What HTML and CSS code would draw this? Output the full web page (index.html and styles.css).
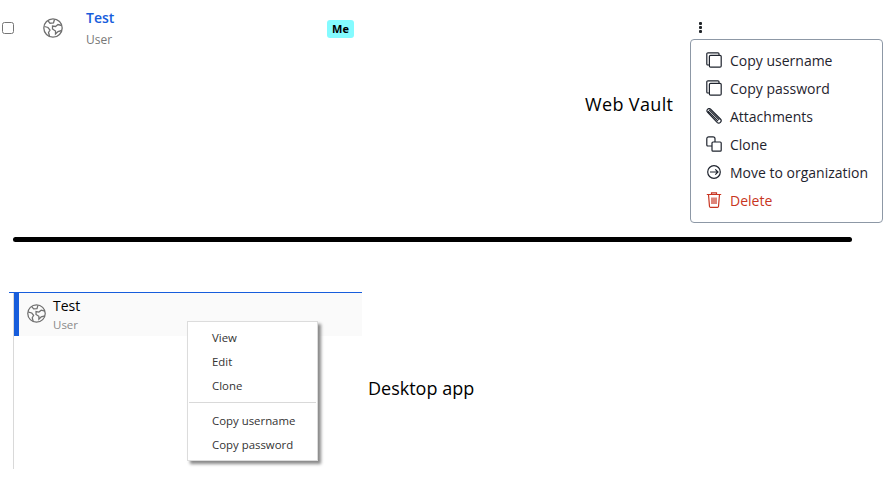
FILE: index.html
```html
<!DOCTYPE html>
<html lang="en">
<head>
    <meta charset="UTF-8">
    <title>Web Vault and Desktop app menus</title>
    <link rel="stylesheet" href="styles.css">
</head>
<body>
    <svg class="defs" width="0" height="0">
        <symbol id="globe" viewBox="0 0 20 20">
            <circle cx="10" cy="10" r="9.2"/>
            <path d="M5 2.800 7 5.200 10.500 4.800 11.500 1.500M1.500 8.500 5 9.500 7 12 5.500 14.500 6.500 18M18.800 7.500 15 6.500 12.500 8.500 9.500 8 9.500 11 12.500 13 12.500 16 15 13.500 18.800 12.500"/>
        </symbol>
        <symbol id="copy" viewBox="0 0 16 16">
            <path d="M3 13H1.800a1 1 0 0 1-1-1V2a1.200 1.200 0 0 1 1.200-1.200H12a1 1 0 0 1 1 1V3"/>
            <rect x="3.400" y="3.400" width="11.800" height="11.800" rx="1.200"/>
        </symbol>
    </svg>

    <section class="vault">
        <div class="cipher-row">
            <input type="checkbox" class="cipher-check">
            <svg class="globe vault-globe"><use href="#globe"/></svg>
            <div class="cipher-name">
                <a class="cipher-link">Test</a>
                <small>User</small>
            </div>
            <span class="badge">Me</span>
        </div>
        <div class="vault-label">Web Vault</div>
        <div class="actions">
            <div class="kebab"><i></i><i></i><i></i></div>
            <ul class="action-menu">
                <li><svg class="menu-icon"><use href="#copy"/></svg>Copy username</li>
                <li><svg class="menu-icon"><use href="#copy"/></svg>Copy password</li>
                <li>
                    <svg class="menu-icon" viewBox="0 0 16 16">
                        <path d="M1.200 3.800a2.200 2.200 0 0 1 3.200-2.800l10 10a2.300 2.300 0 0 1-3.300 3.300L1.200 3.800M3.200 1.800l10 10M2 3.200l10 10"/>
                    </svg>Attachments
                </li>
                <li>
                    <svg class="menu-icon" viewBox="0 0 16 16">
                        <path d="M6 10H1.800a1 1 0 0 1-1-1V3a2 2 0 0 1 2-2.200H7a2 2 0 0 1 2 2V6"/>
                        <rect x="6" y="6" width="9.200" height="9.200" rx="1"/>
                    </svg>Clone
                </li>
                <li>
                    <svg class="menu-icon" viewBox="0 0 16 16">
                        <circle cx="8" cy="8" r="6.300"/>
                        <path d="M4 8h8M9.300 5.300 12 8 9.300 10.700"/>
                    </svg>Move to organization
                </li>
                <li class="danger">
                    <svg class="menu-icon" viewBox="0 0 16 16">
                        <path d="M.8 2.500h14.400M5.500 2.500V.8h5v1.700M2.500 2.500l1 12a1 1 0 0 0 1 .8h7a1 1 0 0 0 1-.8l1-12M6 5.500v6.500M8 5.500v6.500M10 5.500v6.500"/>
                    </svg>Delete
                </li>
            </ul>
        </div>
    </section>

    <hr class="split">

    <section class="desktop">
        <div class="desktop-list">
            <div class="desktop-item">
                <svg class="globe desktop-globe"><use href="#globe"/></svg>
                <div class="desktop-name">
                    <span>Test</span>
                    <small>User</small>
                </div>
            </div>
            <ul class="context-menu">
                <li>View</li>
                <li>Edit</li>
                <li>Clone</li>
                <li class="sep"></li>
                <li>Copy username</li>
                <li>Copy password</li>
            </ul>
        </div>
        <div class="desktop-label">Desktop app</div>
    </section>
</body>
</html>
```

FILE: styles.css
```css
* {
    box-sizing: border-box;
}

body {
    margin: 0;
    width: 892px;
    height: 494px;
    overflow: hidden;
    background: #ffffff;
    color: #1f242e;
    font-family: "Open Sans", sans-serif;
}

ul {
    list-style: none;
    margin: 0;
    padding: 0;
}

.defs {
    position: absolute;
}

/* Web Vault */
.vault {
    display: flex;
    height: 237px;
}

.cipher-row {
    display: flex;
    align-items: flex-start;
    width: 585px;
    height: 60px;
}

.cipher-check {
    width: 12px;
    height: 12px;
    margin: 22px 0 0 2px;
}

.globe {
    fill: none;
    stroke: #6f6f6f;
    stroke-width: 1.300;
}

.vault-globe {
    width: 20px;
    height: 20px;
    margin: 18px 0 0 29px;
}

.cipher-name {
    display: flex;
    flex-direction: column;
    margin: 8px 0 0 23px;
    width: 241px;
}

.cipher-link {
    color: #175ddc;
    font-size: 14px;
    font-weight: 600;
    line-height: 20px;
}

.cipher-name small {
    color: #777777;
    font-size: 12px;
    line-height: 17px;
    margin-top: 3px;
}

.badge {
    margin-top: 20px;
    width: 27px;
    height: 18px;
    border-radius: 3px;
    background: #84fbff;
    color: #000000;
    font-size: 11px;
    font-weight: 700;
    line-height: 18px;
    text-align: center;
}

.vault-label {
    width: 105px;
    margin-top: 91px;
    font-size: 18px;
    letter-spacing: 0.35px;
    line-height: 26px;
    color: #000000;
}

.actions {
    width: 193px;
}

.kebab {
    display: flex;
    flex-direction: column;
    gap: 1px;
    width: 3px;
    margin: 22px 0 6px 9px;
}

.kebab i {
    width: 3px;
    height: 3px;
    background: #212529;
    border-radius: 1px;
}

.action-menu {
    height: 184px;
    padding: 6px 0 0 15px;
    border: 1px solid #8d98a6;
    border-radius: 4px;
}

.action-menu li {
    display: flex;
    align-items: center;
    gap: 8px;
    height: 28px;
    font-size: 14px;
    white-space: nowrap;
}

.menu-icon {
    flex: none;
    width: 16px;
    height: 16px;
    fill: none;
    stroke: #1f242e;
    stroke-width: 1.200;
}

.danger {
    color: #c83522;
}

.danger .menu-icon {
    stroke: #c83522;
}

/* Separador */
.split {
    width: 839px;
    height: 5px;
    margin: 0 0 0 13px;
    border: 0;
    border-radius: 3px;
    background: #000000;
}

/* Desktop app */
.desktop {
    display: flex;
    padding: 50px 0 0 9px;
}

.desktop-list {
    position: relative;
    width: 353px;
    height: 177px;
    padding-left: 4px;
    border-top: 1px solid #175ddc;
}

.desktop-list::before {
    content: "";
    position: absolute;
    left: 4px;
    top: 0;
    bottom: 0;
    width: 1px;
    background: #d9d9d9;
}

.desktop-item {
    position: relative;
    display: flex;
    height: 43px;
    background: #fafafa;
    border-left: 5px solid #175ddc;
    padding-left: 8px;
    margin-left: 1px;
}

.desktop-globe {
    width: 19px;
    height: 19px;
    margin-top: 11px;
}

.desktop-name {
    display: flex;
    flex-direction: column;
    margin: 3px 0 0 7px;
}

.desktop-name span {
    font-size: 14px;
    line-height: 20px;
    color: #000000;
}

.desktop-name small {
    color: #8a8a8a;
    font-size: 11.500px;
    line-height: 16px;
    margin-top: 1px;
}

.context-menu {
    position: absolute;
    left: 178px;
    top: 28px;
    width: 131px;
    height: 140px;
    padding: 4px 1px;
    background: #ffffff;
    border: 1px solid #dcdcdc;
    box-shadow: 3px 3px 3px #8a8a8a;
    font-size: 11.400px;
    color: #333333;
}

.context-menu li {
    height: 24px;
    line-height: 24px;
    padding-left: 23px;
}

.context-menu .sep {
    height: 1px;
    margin: 4px 0 6px;
    padding: 0;
    background: #d9d9d9;
}

.desktop-label {
    margin: 83px 0 0 6px;
    font-size: 18px;
    line-height: 26px;
    color: #000000;
}
```
